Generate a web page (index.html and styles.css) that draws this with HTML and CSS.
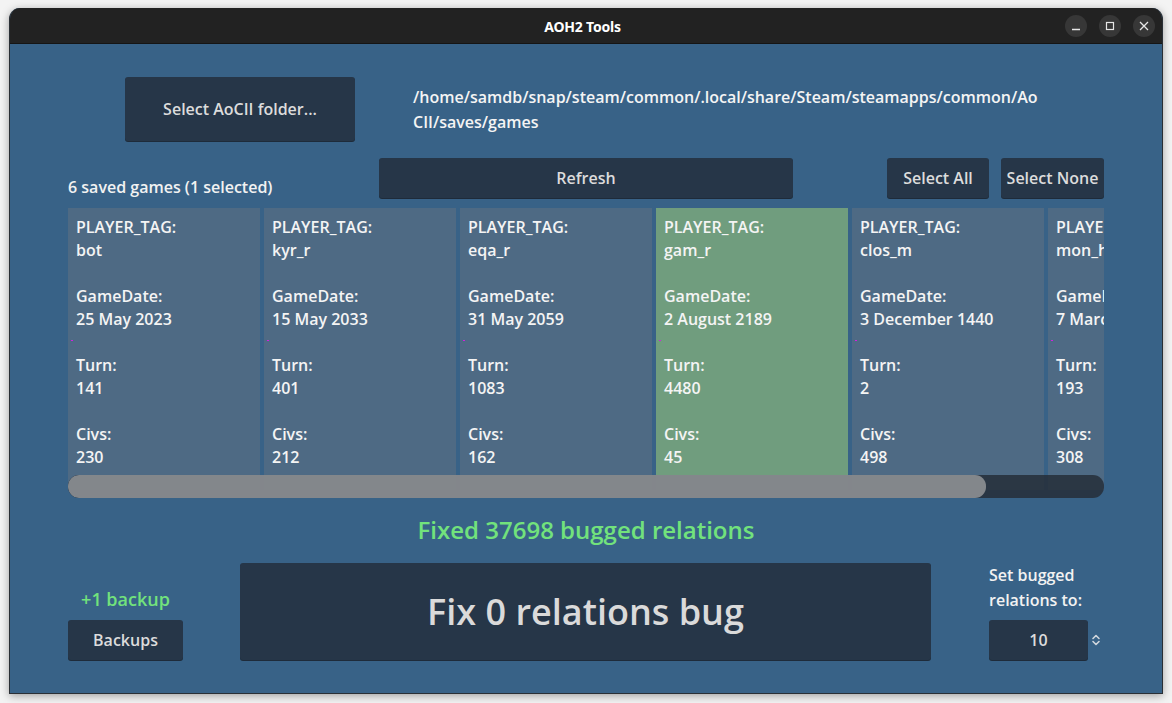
FILE: index.html
```html
<!DOCTYPE html>
<html>
<head>
<meta charset="utf-8">
<link rel="stylesheet" href="styles.css">
</head>
<body>
<div class="window">
  <div class="titlebar">
    <div></div>
    <div class="title">AOH2 Tools</div>
    <div class="controls">
      <span class="ctl"><svg width="10" height="10" viewBox="0 0 10 10"><path d="M1 8.5H9" stroke="#e6e6e6" stroke-width="1.3" fill="none"/></svg></span>
      <span class="ctl"><svg width="10" height="10" viewBox="0 0 10 10"><rect x="1.5" y="1.5" width="7" height="7" stroke="#e6e6e6" stroke-width="1.2" fill="none"/></svg></span>
      <span class="ctl"><svg width="10" height="10" viewBox="0 0 10 10"><path d="M1 1L9 9M9 1L1 9" stroke="#e6e6e6" stroke-width="1.3" fill="none"/></svg></span>
    </div>
  </div>
  <div class="content">
    <div class="row-folder">
      <button class="btn btn-folder">Select AoCII folder...</button>
      <div class="path">/home/samdb/snap/steam/common/.local/share/Steam/steamapps/common/Ao<br>CII/saves/games</div>
    </div>
    <div class="row-tools">
      <div class="count">6 saved games (1 selected)</div>
      <button class="btn btn-refresh">Refresh</button>
      <div class="spacer"></div>
      <button class="btn btn-sel">Select All</button>
      <button class="btn btn-sel">Select None</button>
    </div>
    <div class="games">
      <div class="cards">
        <div class="card">PLAYER_TAG:<br>bot<br><br>GameDate:<br>25 May 2023<br><br>Turn:<br>141<br><br>Civs:<br>230</div>
        <div class="card">PLAYER_TAG:<br>kyr_r<br><br>GameDate:<br>15 May 2033<br><br>Turn:<br>401<br><br>Civs:<br>212</div>
        <div class="card">PLAYER_TAG:<br>eqa_r<br><br>GameDate:<br>31 May 2059<br><br>Turn:<br>1083<br><br>Civs:<br>162</div>
        <div class="card selected">PLAYER_TAG:<br>gam_r<br><br>GameDate:<br>2 August 2189<br><br>Turn:<br>4480<br><br>Civs:<br>45</div>
        <div class="card">PLAYER_TAG:<br>clos_m<br><br>GameDate:<br>3 December 1440<br><br>Turn:<br>2<br><br>Civs:<br>498</div>
        <div class="card">PLAYER_TAG:<br>mon_h<br><br>GameDate:<br>7 March 1812<br><br>Turn:<br>193<br><br>Civs:<br>308</div>
      </div>
      <div class="scrollbar"><div class="thumb"></div></div>
    </div>
    <div class="status">Fixed 37698 bugged relations</div>
    <div class="row-bottom">
      <div class="col-backup">
        <div class="backup-note">+1 backup</div>
        <button class="btn btn-backups">Backups</button>
      </div>
      <button class="btn btn-fix">Fix 0 relations bug</button>
      <div class="col-set">
        <div class="set-label">Set bugged<br>relations to:</div>
        <div class="spin-row">
          <div class="spinbox">10</div>
          <svg class="spin-arrows" width="10" height="14" viewBox="0 0 10 14"><path d="M2 5.5L5 2.5L8 5.5M2 8.5L5 11.5L8 8.5" stroke="#d0d6dc" stroke-width="1.6" fill="none" stroke-linecap="round" stroke-linejoin="round"/></svg>
        </div>
      </div>
    </div>
  </div>
</div>
</body>
</html>
```
FILE: styles.css
```css
* { box-sizing: border-box; }
html, body { margin: 0; padding: 0; }
body {
  background: #f3f3f3;
  width: 1172px;
  height: 703px;
  overflow: hidden;
  font-family: "Open Sans", "Noto Sans", sans-serif;
  font-weight: 600;
}
.window {
  margin: 8px 0 0 9px;
  width: 1154px;
  height: 686px;
  border-radius: 11px 11px 0 0;
  background: #386287;
  border: 1px solid #2a2f35;
  border-top: none;
  box-shadow: 0 2px 9px rgba(0,0,0,0.35);
  display: flex;
  flex-direction: column;
  overflow: hidden;
}
.titlebar {
  height: 36px;
  flex: none;
  background: #222222;
  border-bottom: 1px solid #151515;
  display: grid;
  grid-template-columns: 1fr auto 1fr;
  align-items: center;
  padding: 1px 7px 0 0;
}
.title {
  color: #ffffff;
  font-family: "Noto Sans", sans-serif;
  font-weight: 700;
  font-size: 14px;
  letter-spacing: -0.2px;
}
.controls {
  justify-self: end;
  display: flex;
  gap: 12px;
}
.ctl {
  width: 22px;
  height: 22px;
  border-radius: 50%;
  background: #373737;
  display: flex;
  align-items: center;
  justify-content: center;
}
.content {
  flex: 1;
  padding: 33px 58px 0 58px;
  display: flex;
  flex-direction: column;
  color: #f2f2f2;
}
.btn {
  font-family: "Open Sans", "Noto Sans", sans-serif;
  font-weight: 600;
  font-size: 16px;
  color: #dcdcdc;
  background: #263648;
  border: none;
  border-radius: 3px;
  box-shadow: 0 1px 0 #1e2b3a;
  padding: 0;
  margin: 0;
}
.row-folder {
  display: flex;
  align-items: center;
  height: 64px;
  padding-left: 57px;
  gap: 58px;
}
.btn-folder {
  width: 230px;
  height: 64px;
}
.path {
  font-size: 16px;
  line-height: 25px;
  padding-top: 2px;
  color: #f4f4f4;
}
.row-tools {
  margin-top: 17px;
  height: 40px;
  display: flex;
}
.count {
  width: 311px;
  font-size: 16px;
  line-height: 22px;
  align-self: flex-end;
  color: #f2f2f2;
}
.btn-refresh {
  width: 414px;
  height: 40px;
}
.spacer { flex: 1; }
.btn-sel {
  width: 102px;
  height: 40px;
  margin-left: 12px;
}
.btn-sel:last-child { width: 103px; }
.games {
  position: relative;
  margin-top: 10px;
  height: 290px;
}
.cards {
  display: flex;
  gap: 4px;
  overflow: hidden;
  height: 282px;
}
.card {
  position: relative;
  flex: none;
  width: 192px;
  height: 282px;
  background: #4e6a84;
  padding: 8px 8px;
  font-size: 16px;
  line-height: 23px;
  color: #f4f4f4;
  white-space: nowrap;
}
.card::after {
  content: "";
  position: absolute;
  left: 3px;
  top: 132px;
  width: 2px;
  height: 1px;
  background: #d020e0;
}
.card.selected { background: #709d7e; }
.scrollbar {
  position: absolute;
  left: 0;
  right: 0;
  top: 267px;
  height: 23px;
  border-radius: 11px;
  background: rgba(38, 46, 56, 0.85);
  overflow: hidden;
}
.thumb {
  width: 918px;
  height: 100%;
  border-radius: 11px;
  background: rgba(136, 139, 143, 0.95);
}
.status {
  margin-top: 17px;
  height: 30px;
  line-height: 30px;
  text-align: center;
  font-size: 24px;
  color: #72e27c;
}
.row-bottom {
  margin-top: 18px;
  height: 97px;
  display: flex;
}
.col-backup {
  width: 115px;
  display: flex;
  flex-direction: column;
  justify-content: flex-end;
  align-items: center;
}
.backup-note {
  font-size: 18px;
  line-height: 24px;
  color: #72e27c;
  margin-bottom: 9px;
}
.btn-backups {
  width: 115px;
  height: 40px;
}
.btn-fix {
  margin-left: 57px;
  width: 691px;
  height: 97px;
  font-size: 36px;
  color: #dadada;
}
.col-set {
  margin-left: 58px;
  display: flex;
  flex-direction: column;
}
.set-label {
  font-size: 16px;
  line-height: 25px;
  color: #f2f2f2;
}
.spin-row {
  margin-top: 7px;
  display: flex;
  align-items: center;
  gap: 3px;
}
.spinbox {
  width: 99px;
  height: 40px;
  background: #263648;
  border-radius: 3px;
  box-shadow: 0 1px 0 #1e2b3a;
  font-size: 16px;
  line-height: 40px;
  text-align: center;
  color: #dcdcdc;
}
.spin-arrows { margin-left: 0; }
```
